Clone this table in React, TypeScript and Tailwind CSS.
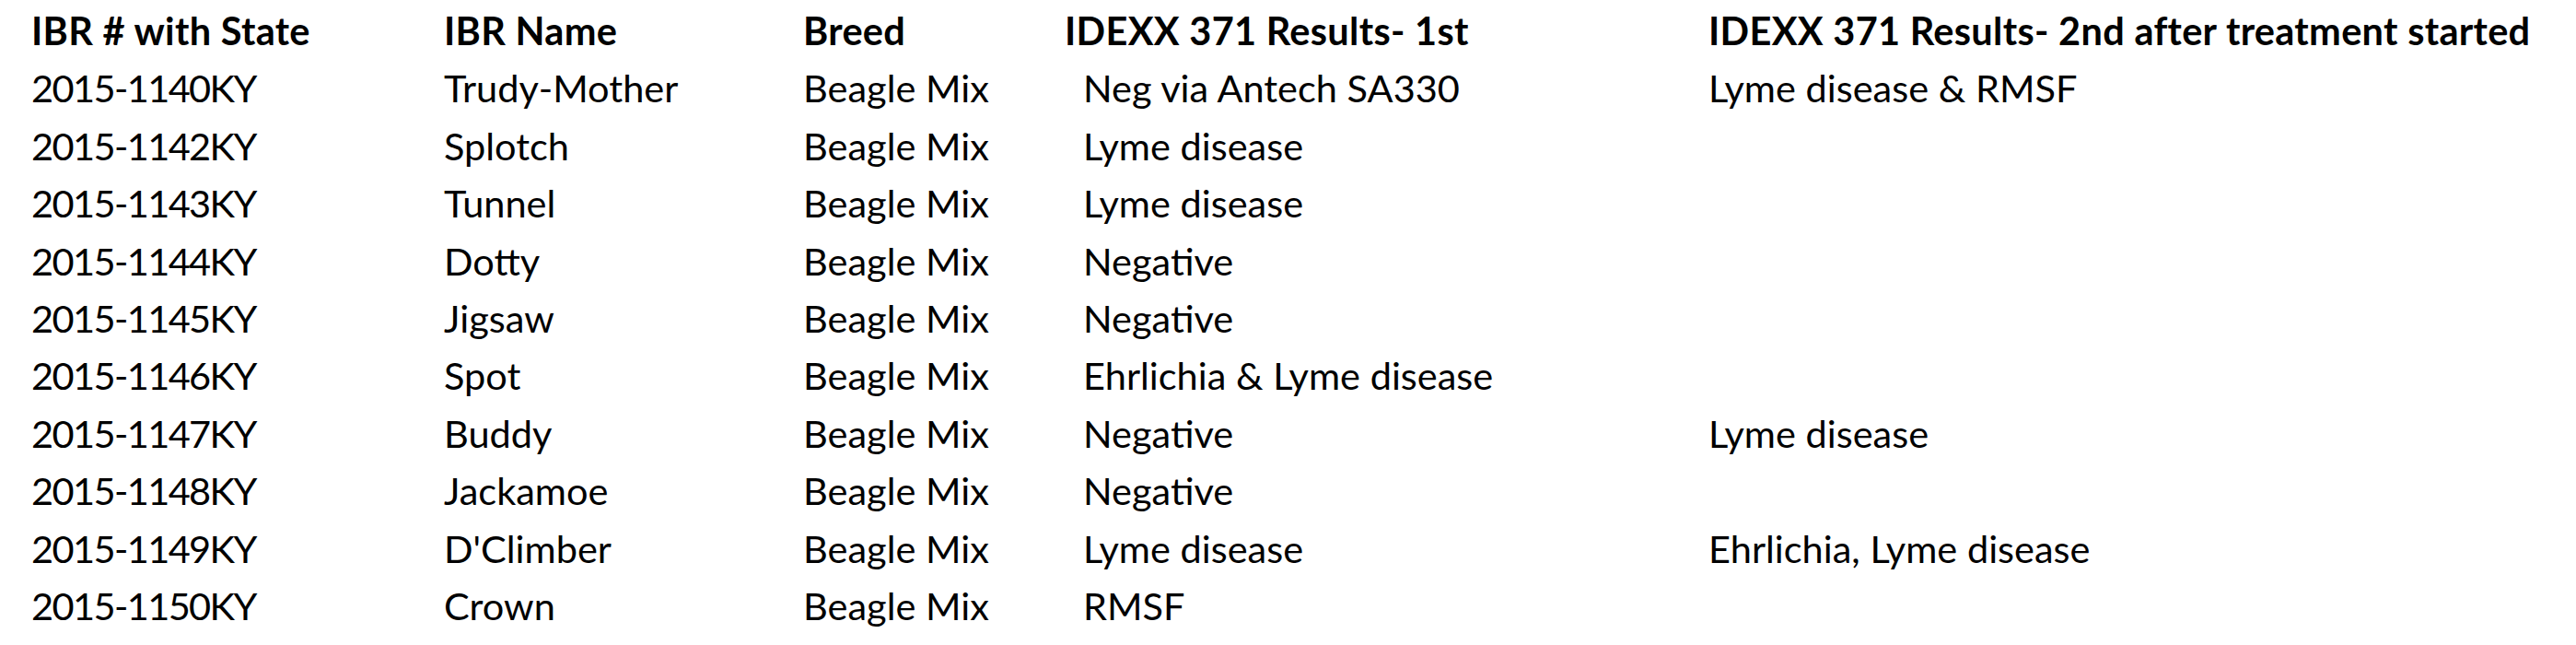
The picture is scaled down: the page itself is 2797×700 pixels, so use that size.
const headers = [
  "IBR # with State",
  "IBR Name",
  "Breed",
  "IDEXX 371 Results- 1st",
  "IDEXX 371 Results- 2nd after treatment started",
];

const rows: [string, string, string, string, string][] = [
  ["2015-1140KY", "Trudy-Mother", "Beagle Mix", "Neg via Antech SA330", "Lyme disease & RMSF"],
  ["2015-1142KY", "Splotch", "Beagle Mix", "Lyme disease", ""],
  ["2015-1143KY", "Tunnel", "Beagle Mix", "Lyme disease", ""],
  ["2015-1144KY", "Dotty", "Beagle Mix", "Negative", ""],
  ["2015-1145KY", "Jigsaw", "Beagle Mix", "Negative", ""],
  ["2015-1146KY", "Spot", "Beagle Mix", "Ehrlichia & Lyme disease", ""],
  ["2015-1147KY", "Buddy", "Beagle Mix", "Negative", "Lyme disease"],
  ["2015-1148KY", "Jackamoe", "Beagle Mix", "Negative", ""],
  ["2015-1149KY", "D'Climber", "Beagle Mix", "Lyme disease", "Ehrlichia, Lyme disease"],
  ["2015-1150KY", "Crown", "Beagle Mix", "RMSF", ""],
];

const cols = "grid grid-cols-[448px_390px_284px_699px_1fr]";

export default function App() {
  return (
    <main className="h-[700px] w-[2797px] overflow-hidden bg-white pl-[34px] pt-[2px] font-['Lato',sans-serif] text-[41.5px] leading-[62.4px] text-black">
      <div className={`${cols} h-[62.4px] font-bold`}>
        {headers.map((h) => (
          <div key={h} className="whitespace-nowrap tracking-[0.3px]">
            {h}
          </div>
        ))}
      </div>
      {rows.map((r) => (
        <div key={r[0]} className={`${cols} h-[62.4px]`}>
          <div className="whitespace-nowrap tracking-[-1.6px]">{r[0]}</div>
          <div className="whitespace-nowrap">{r[1]}</div>
          <div className="whitespace-nowrap">{r[2]}</div>
          <div className="whitespace-nowrap pl-[20px]">{r[3]}</div>
          <div className="whitespace-nowrap">{r[4]}</div>
        </div>
      ))}
    </main>
  );
}
